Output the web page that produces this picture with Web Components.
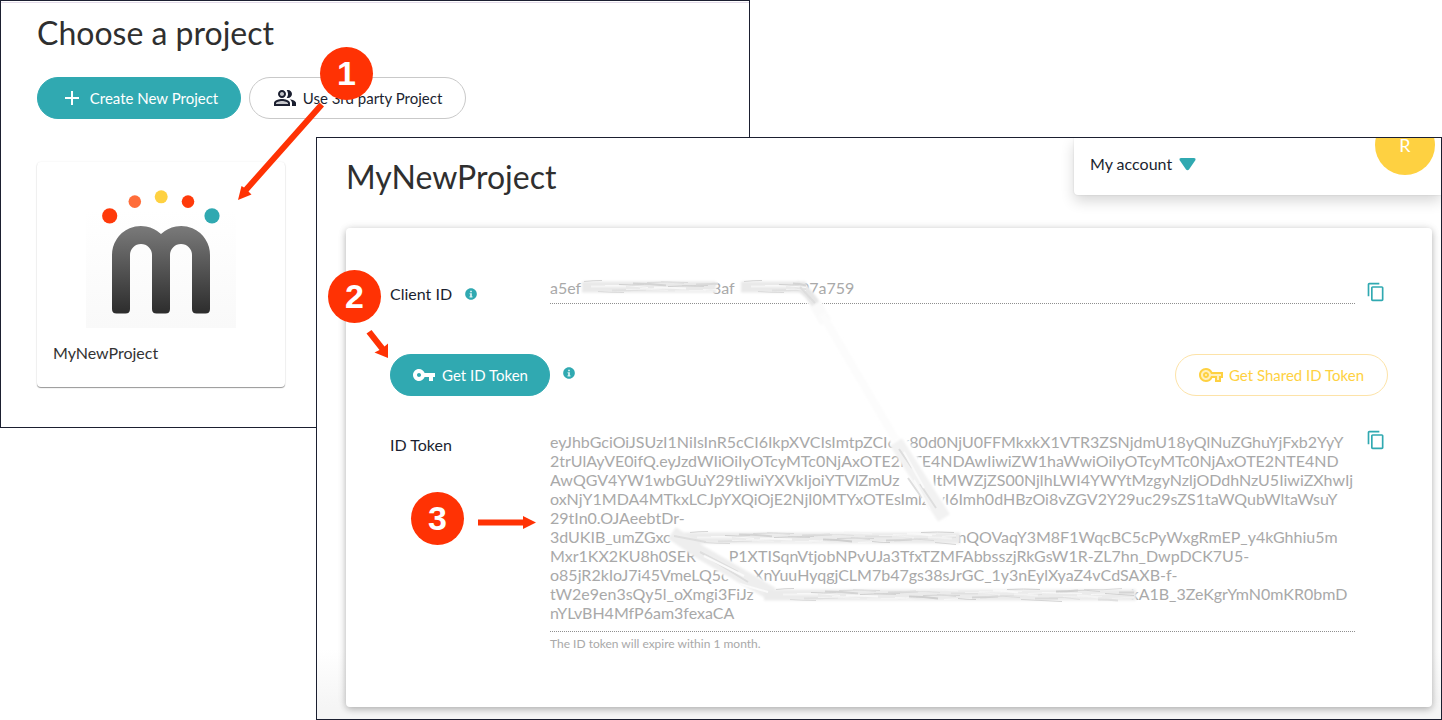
<!DOCTYPE html>
<html lang="en">
<head>
<meta charset="utf-8">
<meta name="viewport" content="width=device-width, initial-scale=1">
<title>MyNewProject</title>
<style>
  body { margin: 0; background: #fff; color: #2f2f33; font: 16px/20px Lato, "Open Sans", sans-serif; }
</style>
</head>
<body>
<guide-stage>
  <app-window slot="back">
    <page-title>Choose a project</page-title>
    <button-row>
      <pill-button kind="solid" icon="plus" style="--pill-width: 204px">Create New Project</pill-button>
      <pill-button kind="outline" icon="people" style="--pill-width: 217px">Use 3rd party Project</pill-button>
    </button-row>
    <project-card>MyNewProject</project-card>
  </app-window>
  <app-window slot="front" raised>
    <window-header>
      <page-title>MyNewProject</page-title>
      <account-menu slot="end" initial="R">My account</account-menu>
    </window-header>
    <token-panel></token-panel>
  </app-window>
  <redaction-layer slot="notes"></redaction-layer>
  <guide-arrows slot="notes"></guide-arrows>
  <step-badge slot="notes" style="left: 320px; top: 47px">1</step-badge>
  <step-badge slot="notes" style="left: 328px; top: 270px">2</step-badge>
  <step-badge slot="notes" style="left: 411px; top: 492px">3</step-badge>
</guide-stage>

<script>
const ICONS = {
  plus: '<path d="M19 13h-6v6h-2v-6H5v-2h6V5h2v6h6z"/>',
  people: '<path opacity=".25" d="M9 5a3 3 0 1 0 0 6a3 3 0 0 0 0-6zM2 18c0-2 4-4 7-4s7 2 7 4v1H2z"/><path d="M16.67 13.13C18.04 14.06 19 15.32 19 17v3h4v-3c0-2.18-3.57-3.47-6.33-3.87zM15 12c2.21 0 4-1.79 4-4s-1.79-4-4-4c-.47 0-.91.1-1.33.24C14.5 5.27 15 6.58 15 8s-.5 2.73-1.33 3.76c.42.14.86.24 1.33.24zM9 12c2.21 0 4-1.79 4-4s-1.79-4-4-4-4 1.79-4 4 1.79 4 4 4zm0-6c1.1 0 2 .9 2 2s-.9 2-2 2-2-.9-2-2 .9-2 2-2zM9 13c-2.67 0-8 1.34-8 4v3h16v-3c0-2.66-5.33-4-8-4zm6 5H3v-.99C3.2 16.29 6.3 15 9 15s5.8 1.29 6 2v1z"/>',
  key: '<path d="M12.65 10C11.83 7.67 9.61 6 7 6c-3.31 0-6 2.69-6 6s2.69 6 6 6c2.61 0 4.83-1.67 5.65-4H17v4h4v-4h2v-4H12.65zM7 14c-1.1 0-2-.9-2-2s.9-2 2-2 2 .9 2 2-.9 2-2 2z"/>',
  sharedKey: '<path opacity=".35" d="M7 6a6 6 0 1 0 5.500 8H17v4h4v-4h2v-4H12.500A6 6 0 0 0 7 6z"/><path d="M22 19h-6v-4h-2.680c-1.140 2.420-3.600 4-6.320 4-3.860 0-7-3.140-7-7s3.140-7 7-7c2.720 0 5.170 1.580 6.320 4H24v6h-2v4zm-4-2h2v-4h2v-2H11.940l-.230-.670C11.010 8.340 9.110 7 7 7c-2.760 0-5 2.240-5 5s2.240 5 5 5c2.110 0 4.010-1.340 4.710-3.330l.230-.670H18v4zM7 15c-1.650 0-3-1.350-3-3s1.350-3 3-3 3 1.350 3 3-1.350 3-3 3zm0-4c-.550 0-1 .450-1 1s.450 1 1 1 1-.450 1-1-.450-1-1-1z"/>',
  copy: '<path d="M16 1H4c-1.100 0-2 .9-2 2v14h2V3h12V1zm3 4H8c-1.100 0-2 .9-2 2v14c0 1.100.9 2 2 2h11c1.100 0 2-.9 2-2V7c0-1.100-.9-2-2-2zm0 16H8V7h11v14z"/>',
  info: '<path d="M12 2C6.480 2 2 6.480 2 12s4.480 10 10 10 10-4.480 10-10S17.520 2 12 2z"/><path fill="#d9f2f3" d="M10.500 6.500h3v2.500h-3zM9.500 10.500h4v5.500h1V18h-5v-2h1v-3.500h-1z"/>'
};
const svgIcon = (name, size) =>
  `<svg width="${size}" height="${size}" viewBox="0 0 24 24" fill="currentColor" aria-hidden="true">${ICONS[name]}</svg>`;

const define = (tag, render) => customElements.define(tag, class extends HTMLElement {
  connectedCallback() {
    if (this.shadowRoot) return;
    this.attachShadow({ mode: 'open' }).innerHTML = render(this);
  }
});

/* Two overlapping windows with notes drawn over them */
define('guide-stage', () => `
  <style>
    :host { display: grid; position: relative; overflow: hidden; grid-template-columns: minmax(0, 1fr); }
    ::slotted([slot=back]) { grid-area: 1 / 1; justify-self: start; align-self: start; width: 52%; min-height: 428px; }
    ::slotted([slot=front]) { grid-area: 1 / 1; margin: 137px 0 0 316px; }
  </style>
  <slot name="back"></slot><slot name="front"></slot><slot name="notes"></slot>`);

define('app-window', () => `
  <style>
    :host { display: block; box-sizing: border-box; overflow: hidden; border: 1px solid #1b1f30;
      padding: 12px 36px;
      background: linear-gradient(#fff 1px, #e4dcea 1px 2px, #fff 2px); }
    :host([raised]) { padding: 0 9px 12px 29px;
      background: linear-gradient(#fff 88%, #f5f5f5 98%); }
  </style>
  <slot></slot>`);

define('page-title', () => `
  <style>
    :host { display: block; }
    h1 { margin: 0; font-size: 32px; line-height: 40px; font-weight: 400; color: #2f2f2f; }
  </style>
  <h1><slot></slot></h1>`);

define('button-row', () => `
  <style>:host { display: flex; gap: 8px; margin: 24px 0 43px; }</style>
  <slot></slot>`);

define('pill-button', el => `
  <style>
    :host { display: block; }
    button { display: flex; align-items: center; justify-content: center; gap: 6px; box-sizing: border-box;
      min-width: var(--pill-width); height: 42px; padding: 0 16px; border: 1px solid #c9c9c9; border-radius: 21px;
      background: #fff; color: #1b1f30; font: inherit; font-size: 15px; white-space: nowrap; cursor: pointer; }
    :host([kind=solid]) button { background: #30a9b1; border-color: #30a9b1; color: #fff; }
    :host([kind=shared]) button { border-color: #fde3a8; color: #fed141; }
    svg { flex: none; }
  </style>
  <button type="button">${svgIcon(el.getAttribute('icon'), 24)}<span><slot></slot></span></button>`);

define('project-card', () => `
  <style>
    :host { display: block; box-sizing: border-box; width: 248px; padding: 26px 16px 24px; border-radius: 4px;
      background: #fff; box-shadow: 0 1px 1px rgba(0,0,0,.4), 0 0 2px rgba(0,0,0,.08); }
    svg { display: block; margin: 0 auto 15px; }
    a { color: #333; text-decoration: none; }
  </style>
  <svg width="150" height="140" viewBox="86 188 150 140" role="img" aria-label="Project logo">
    <defs>
      <linearGradient id="leg" gradientUnits="userSpaceOnUse" x1="0" y1="226" x2="0" y2="314">
        <stop offset="0" stop-color="#7a7a7a"/><stop offset="1" stop-color="#2c2c2c"/>
      </linearGradient>
      <linearGradient id="tile" x1="0" y1="0" x2="0" y2="1">
        <stop offset="0" stop-color="#fff"/><stop offset="1" stop-color="#f9f9f9"/>
      </linearGradient>
    </defs>
    <path fill="url(#tile)" d="M86 210h150v118H86z"/>
    <circle cx="109.700" cy="215.800" r="7.600" fill="#ff3a0a"/>
    <circle cx="134.800" cy="201.600" r="6.300" fill="#ff6d3a"/>
    <circle cx="161.200" cy="196.800" r="6.500" fill="#fed141"/>
    <circle cx="188" cy="201.600" r="6.300" fill="#ff3a0a"/>
    <circle cx="212" cy="215.800" r="7.600" fill="#30a9b1"/>
    <path fill="url(#leg)" d="M112 255a29 29 0 0 1 49-21a29 29 0 0 1 49 21v54q0 4.500-4.500 4.500h-9q-4.500 0-4.500-4.500v-54a11 11 0 0 0-22 0v54q0 4.500-4.500 4.500h-9q-4.500 0-4.500-4.500v-54a11 11 0 0 0-22 0v54q0 4.500-4.500 4.500h-9q-4.500 0-4.500-4.500z"/>
  </svg>
  <a href="#project"><slot></slot></a>`);

define('window-header', () => `
  <style>
    :host { display: flex; justify-content: space-between; align-items: flex-start; height: 90px; }
    .title { padding-top: 19px; }
    ::slotted([slot=end]) { margin-right: -9px; }
  </style>
  <div class="title"><slot></slot></div><slot name="end"></slot>`);

define('account-menu', el => `
  <style>
    :host { display: flex; justify-content: space-between; align-items: flex-start; box-sizing: border-box;
      width: 367px; height: 57px; padding: 0 6px 0 16px; border-radius: 0 0 0 4px; background: #fff;
      box-shadow: 0 6px 14px rgba(0,0,0,.16), 0 0 2px rgba(0,0,0,.12); }
    button { display: flex; align-items: center; gap: 7px; margin: 0; padding: 16px 0 0; border: 0;
      background: none; color: #1b1f30; font: inherit; cursor: pointer; }
    .avatar { box-sizing: border-box; width: 60px; height: 60px; margin-top: -23px; padding-top: 22px;
      border-radius: 50%; background: #fed141; color: #fff; font-size: 18px; line-height: 16px; text-align: center; }
  </style>
  <button type="button"><slot></slot>
    <svg width="17" height="13" viewBox="0 0 17 13" aria-hidden="true"><path fill="#30a9b1" d="M2 0h13q2 0 1.500 2L10 11.500q-1.500 1.500-3 0L.5 2Q0 0 2 0z"/></svg>
  </button>
  <span class="avatar">${el.getAttribute('initial')}</span>`);

define('info-tip', el => `
  <style>
    :host { display: block; }
    button { display: block; padding: 0; border: 0; background: none; color: #30a9b1; cursor: pointer; }
    svg { display: block; }
  </style>
  <button type="button" aria-label="${el.getAttribute('label')}">${svgIcon('info', 14)}</button>`);

define('copy-button', el => `
  <style>
    :host { display: block; }
    button { display: block; padding: 0; border: 0; background: none; color: #30a9b1; cursor: pointer; }
    svg { display: block; }
  </style>
  <button type="button" aria-label="${el.getAttribute('label')}">${svgIcon('copy', 20)}</button>`);

const gap = n => ' '.repeat(n);
const CLIENT_ID = `a5ef${gap(32)}3af${gap(16)}07a759`;
const ID_TOKEN = [
  'eyJhbGciOiJSUzI1NiIsInR5cCI6IkpXVCIsImtpZCI6Ik80d0NjU0FFMkxkX1VTR3ZSNjdmU18yQlNuZGhuYjFxb2YyY',
  '2trUlAyVE0ifQ.eyJzdWIiOiIyOTcyMTc0NjAxOTE2NTE4NDAwIiwiZW1haWwiOiIyOTcyMTc0NjAxOTE2NTE4ND',
  `AwQGV4YW1wbGUuY29tIiwiYXVkIjoiYTVlZmUz${gap(8)}ItMWZjZS00NjlhLWI4YWYtMzgyNzljODdhNzU5IiwiZXhwIj`,
  'oxNjY1MDA4MTkxLCJpYXQiOjE2NjI0MTYxOTEsImlzcyI6Imh0dHBzOi8vZGV2Y29uc29sZS1taWQubWltaWsuY',
  '29tIn0.OJAeebtDr-',
  `3dUKIB_umZGxc${gap(70)}nQOVaqY3M8F1WqcBC5cPyWxgRmEP_y4kGhhiu5m`,
  `Mxr1KX2KU8h0SER${gap(8)}P1XTISqnVtjobNPvUJa3TfxTZMFAbbsszjRkGsW1R-ZL7hn_DwpDCK7U5-`,
  `o85jR2kIoJ7i45VmeLQ5c${gap(6)}XnYuuHyqgjCLM7b47gs38sJrGC_1y3nEylXyaZ4vCdSAXB-f-`,
  `tW2e9en3sQy5l_oXmgi3FiJz${gap(92)}kA1B_3ZeKgrYmN0mKR0bmD`,
  'nYLvBH4MfP6am3fexaCA'
].join('\n');

define('token-panel', () => `
  <style>
    :host { display: block; padding: 44px 44px 55px; border-radius: 4px; background: #fff;
      box-shadow: 0 2px 7px rgba(0,0,0,.28), 0 0 12px rgba(0,0,0,.05); }
    .row { display: grid; grid-template-columns: 160px minmax(0, 1fr) 33px; align-items: start; }
    label { color: #1b1f30; white-space: nowrap; }
    .label { display: flex; gap: 12px; align-items: center; }
    .client .label { padding-top: 12px; }
    .token .label { padding-top: 5px; }
    input, textarea { display: block; box-sizing: border-box; width: 100%; margin: 0; padding: 0;
      border: 0; border-bottom: 1px dotted #8f8f8f; border-radius: 0; outline: 0; background: none;
      color: #a9a9a9; font: inherit; }
    input { height: 32px; }
    textarea { height: 202px; padding-top: 2px; line-height: 19px; resize: none; white-space: pre; overflow: hidden; }
    copy-button { padding-left: 11px; }
    .client copy-button { padding-top: 10px; }
    .actions { display: flex; align-items: center; margin: 50px 0 34px; }
    .actions info-tip { margin: 0 auto 4px 12px; }
    p { margin: 4px 0 0; color: #a9a9a9; font-size: 12px; line-height: 16px; }
  </style>
  <div class="row client">
    <div class="label"><label for="client">Client ID</label><info-tip label="About the client ID"></info-tip></div>
    <div><input id="client" readonly value="${CLIENT_ID}"></div>
    <copy-button label="Copy client ID"></copy-button>
  </div>
  <div class="actions">
    <pill-button kind="solid" icon="key" style="--pill-width: 160px">Get ID Token</pill-button>
    <info-tip label="About the ID token"></info-tip>
    <pill-button kind="shared" icon="sharedKey" style="--pill-width: 213px">Get Shared ID Token</pill-button>
  </div>
  <div class="row token">
    <div class="label"><label for="token">ID Token</label></div>
    <div><textarea id="token" readonly wrap="off">${ID_TOKEN}</textarea>
      <p>The ID token will expire within 1 month.</p></div>
    <copy-button label="Copy ID token"></copy-button>
  </div>`);

/* Smeared eraser strokes that hide parts of the two values */
const streaks = (x1, x2, y, h) => {
  let out = '';
  for (let x = x1, i = 0; x < x2 - 12; x += 7, i++) {
    const len = Math.min(18 + (i * 17) % 26, x2 - x);
    const top = y - h / 2 + (i * 5) % h;
    const grey = ['#d4d4d4', '#f4f4f4', '#dadada', '#f8f8f8', '#e0e0e0', '#cfcfcf', '#f2f2f2'][i % 7];
    out += `<path stroke="${grey}" stroke-width="${1 + (i % 3 === 1)}" d="M${x} ${top}q${len / 2} ${i % 3 - 1} ${len} ${(i % 4) - 1}"/>`;
  }
  return out;
};
define('redaction-layer', () => `
  <style>
    :host { position: absolute; left: 0; top: 0; pointer-events: none; }
    svg { display: block; }
  </style>
  <svg width="1442" height="720" viewBox="0 0 1442 720" fill="none" stroke-linejoin="round" aria-hidden="true">
    <defs>
      <filter id="soft" filterUnits="userSpaceOnUse" x="540" y="260" width="640" height="360"><feGaussianBlur stdDeviation=".6"/></filter>
      <filter id="wide" filterUnits="userSpaceOnUse" x="540" y="260" width="640" height="360"><feGaussianBlur stdDeviation="1.200"/></filter>
    </defs>
    <g filter="url(#wide)" stroke="#fff" stroke-linecap="round">
      <path stroke-width="11" d="M590 287H708M748 287H800L816 304L896 440"/>
      <path stroke-width="17" d="M898 440L944 516"/>
      <path stroke-width="16" d="M950 538H684L730 570L772 594H1126"/>
    </g>
    <g filter="url(#wide)">
      <path stroke="#e9e9e9" stroke-width="11" d="M582 287H716M741 287H806"/>
      <path stroke="#e6e6e6" stroke-width="9" d="M796 285Q808 290 818 308"/>
      <path stroke="#fafafa" stroke-width="12" d="M815 304L826 322"/>
      <path stroke="#fcfcfc" stroke-width="8" d="M822 314L896 440"/>
      <path stroke="#f2f2f2" stroke-width="14" d="M896 442L944 518"/>
      <path stroke="#ebebeb" stroke-width="11" d="M960 538H680"/>
      <path stroke="#eeeeee" stroke-width="14" d="M672 533L700 552L772 594"/>
      <path stroke="#ebebeb" stroke-width="11" d="M764 595H1136"/>
    </g>
    <g filter="url(#soft)">
      ${streaks(584, 718, 287, 11)}${streaks(744, 806, 287, 11)}
      ${streaks(690, 956, 538, 11)}${streaks(776, 1134, 595, 11)}
      <path stroke="#dedede" stroke-width="2" d="M800 287L815 303M899 449L912 468M908 478L922 498M920 484L936 508M674 536L706 542M712 560L748 582M700 552L738 572"/>
      <path stroke="#fafafa" stroke-width="2" d="M904 452L924 488M914 480L930 510M704 556L744 576M740 584L768 592"/>
    </g>
  </svg>`);

define('guide-arrows', () => `
  <style>
    :host { position: absolute; left: 0; top: 0; pointer-events: none; }
    svg { display: block; }
  </style>
  <svg width="600" height="560" viewBox="0 0 600 560" fill="#ff3204" aria-hidden="true">
    <path d="M319.500 102.500L324 106.500L248.500 191.500L251.500 194.500L238 200L241.500 186L244 187.500z"/>
    <path d="M371.500 330L384.500 346.500L388 343.500L388 358L374.500 352.500L379.500 350L366.500 333.500z"/>
    <path d="M478 519.500H523V516L536 522.500L523 529V525.500H478z"/>
  </svg>`);

define('step-badge', () => `
  <style>
    :host { position: absolute; width: 53px; height: 53px; border-radius: 50%; background: #ff3204; color: #fff;
      font: bold 34px/53px "Liberation Sans", Arial, sans-serif; text-align: center; }
  </style>
  <slot></slot>`);
</script>
</body>
</html>
